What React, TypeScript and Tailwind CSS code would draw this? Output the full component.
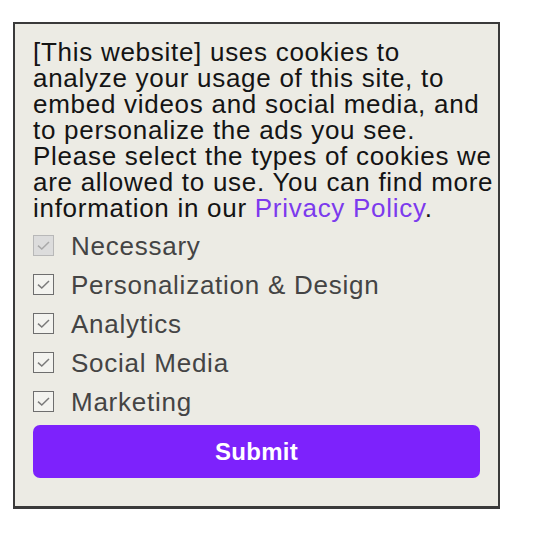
import React from "react"

const options = [
  { label: "Necessary", disabled: true },
  { label: "Personalization & Design", disabled: false },
  { label: "Analytics", disabled: false },
  { label: "Social Media", disabled: false },
  { label: "Marketing", disabled: false },
]

function Check({ disabled }: { disabled: boolean }) {
  return (
    <span
      className={`flex items-center justify-center w-[21px] h-[21px] border ${
        disabled ? "border-[#b8b8b8] bg-[#dcdcdc]" : "border-[#6e6e6e] bg-[#f3f3ef]"
      }`}
    >
      <svg width="17" height="17" viewBox="0 0 17 17" fill="none">
        <path
          d="M3 8.6 L6.8 12 L14 5"
          stroke={disabled ? "#a8a8a8" : "#7a7a7a"}
          strokeWidth="1.5"
        />
      </svg>
    </span>
  )
}

export default function App() {
  return (
    <div className="w-[542px] h-[542px] bg-white pt-[22px] pl-[13px] font-['Liberation_Sans',Arial,sans-serif]">
      <div className="w-[487px] h-[487px] bg-[#ecebe4] border-2 border-[#3a3a3a] border-b-[3px] pt-[15px] pl-[18px] flex flex-col">
        <p className="text-[26px] leading-[26px] tracking-[0.72px] text-[#141414] whitespace-nowrap">
          [This website] uses cookies to
          <br />
          analyze your usage of this site, to
          <br />
          embed videos and social media, and
          <br />
          to personalize the ads you see.
          <br />
          Please select the types of cookies we
          <br />
          are allowed to use. You can find more
          <br />
          information in our <a className="text-[#7c3aed]">Privacy Policy</a>.
        </p>
        <div className="mt-[5px] flex flex-col">
          {options.map((o) => (
            <label key={o.label} className="h-[39px] flex items-center gap-[17px]">
              <Check disabled={o.disabled} />
              <span className="text-[26px] leading-[26px] tracking-[0.75px] text-[#444444]">{o.label}</span>
            </label>
          ))}
        </div>
        <button className="mt-[4px] w-[447px] h-[53px] rounded-[7px] bg-[#7d22fc] text-white font-bold text-[24px] tracking-[0.3px]">
          Submit
        </button>
      </div>
    </div>
  )
}
